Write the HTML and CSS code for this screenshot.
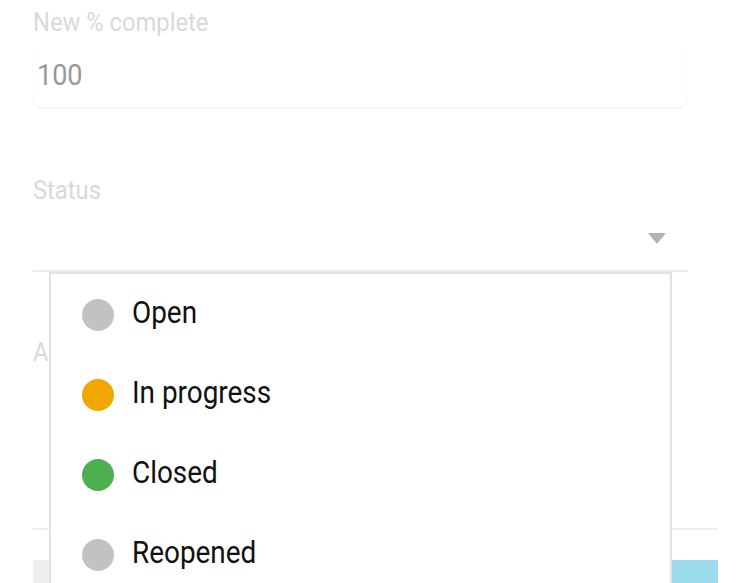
FILE: index.html
```html
<!DOCTYPE html>
<html>
<head>
<meta charset="utf-8">
<link rel="stylesheet" href="styles.css">
</head>
<body>
<div class="form">
  <div class="label"><span class="sx lx">New % complete</span></div>
  <div class="card"><span class="value sx">100</span></div>
  <div class="label status-label"><span class="sx lx">Status</span></div>
  <div class="select"><span class="arrow"></span></div>
  <div class="label assignee-label"><span class="sx lx">Assignee</span></div>
  <div class="area"></div>
  <div class="buttons">
    <div class="btn btn-cancel"></div>
    <div class="btn btn-save"></div>
  </div>
</div>
<div class="menu">
  <div class="item"><span class="dot dot-gray"></span><span class="text sx">Open</span></div>
  <div class="item"><span class="dot dot-orange"></span><span class="text sx">In progress</span></div>
  <div class="item"><span class="dot dot-green"></span><span class="text sx">Closed</span></div>
  <div class="item"><span class="dot dot-gray"></span><span class="text sx">Reopened</span></div>
</div>
</body>
</html>
```

FILE: styles.css
```css
html, body {
  margin: 0;
  padding: 0;
  background: #ffffff;
}
body {
  width: 748px;
  height: 583px;
  overflow: hidden;
  position: relative;
  font-family: Roboto, "Noto Sans", sans-serif;
}
.sx {
  display: inline-block;
  transform: scaleX(0.9);
  transform-origin: left center;
  white-space: nowrap;
}
.sx.lx {
  transform: scaleX(0.95);
}
.form {
  padding: 8px 0 0 33px;
}
.label {
  font-size: 25px;
  line-height: 30px;
  height: 30px;
  color: #d9d9d9;
}
.card {
  width: 654px;
  height: 61px;
  margin-top: 8px;
  border-radius: 8px;
  box-shadow: 0 1px 2px rgba(0, 0, 0, 0.07), 0 0 1px rgba(0, 0, 0, 0.04);
  display: flex;
  align-items: center;
  padding-left: 4px;
  box-sizing: border-box;
}
.value {
  font-size: 30px;
  line-height: 36px;
  padding-bottom: 4px;
  color: #999999;
}
.status-label {
  margin-top: 69px;
}
.select {
  width: 655px;
  height: 66px;
  border-bottom: 2px solid #ececf0;
  display: flex;
  justify-content: flex-end;
  align-items: center;
  padding-right: 22px;
  box-sizing: border-box;
}
.arrow {
  width: 0;
  height: 0;
  border-left: 9px solid transparent;
  border-right: 9px solid transparent;
  border-top: 11px solid #b4b4b4;
}
.assignee-label {
  margin-top: 66px;
}
.area {
  width: 685px;
  height: 160px;
  border-bottom: 2px solid #eeeef0;
}
.buttons {
  width: 685px;
  margin-top: 30px;
  display: flex;
  gap: 20px;
}
.btn {
  flex: 1;
  height: 50px;
}
.btn-cancel {
  background: #efefef;
}
.btn-save {
  background: #9ddcee;
}
.menu {
  position: absolute;
  left: 49px;
  top: 272px;
  width: 623px;
  height: 330px;
  box-sizing: border-box;
  border: 2px solid #e0e0e8;
  border-bottom: none;
  background: #ffffff;
  padding-top: 1px;
}
.item {
  height: 80px;
  display: flex;
  align-items: center;
  padding-left: 31px;
  gap: 18px;
}
.dot {
  width: 32px;
  height: 32px;
  border-radius: 50%;
  flex: none;
}
.dot-gray { background: #c2c2c2; }
.dot-orange { background: #f0a800; }
.dot-green { background: #4caf50; }
.text {
  font-size: 31px;
  line-height: 36px;
  padding-bottom: 5px;
  color: #111111;
}
```
